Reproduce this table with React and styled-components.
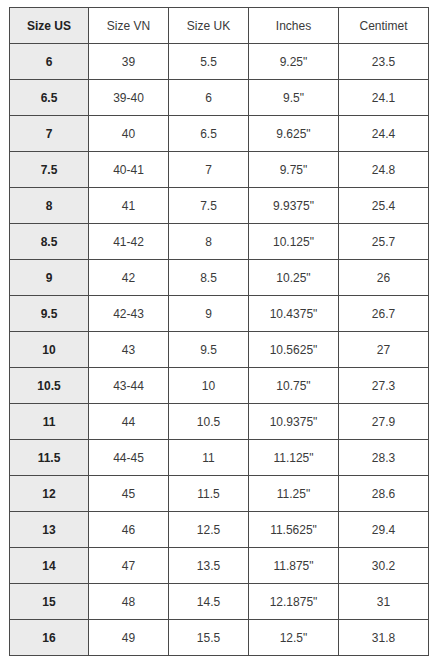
import React from "react";
import styled, { createGlobalStyle } from "styled-components";

const Global = createGlobalStyle`
  html, body { margin: 0; padding: 0; background: #fff; }
  body { font-family: "Liberation Sans", Arial, sans-serif; }
`;

const Page = styled.div`
  padding: 7px 0 0 9px;
`;

const Table = styled.table`
  border-collapse: collapse;
  table-layout: fixed;
  width: 420px;
  font-size: 12px;
  color: #333;
`;

const Cell = styled.td`
  height: 35px;
  padding: 0;
  border: 1px solid #4a4a4a;
  text-align: center;
  vertical-align: middle;
  background: ${(p) => (p.$first ? "#ebebeb" : "#fff")};
  font-weight: ${(p) => (p.$first ? "bold" : "normal")};
  color: ${(p) => (p.$first ? "#222" : "#3a3a3a")};
`;

const headers = ["Size US", "Size VN", "Size UK", "Inches", "Centimet"];
const widths = [79, 80, 80, 90, 90];
const rows = [
  ["6", "39", "5.5", '9.25"', "23.5"],
  ["6.5", "39-40", "6", '9.5"', "24.1"],
  ["7", "40", "6.5", '9.625"', "24.4"],
  ["7.5", "40-41", "7", '9.75"', "24.8"],
  ["8", "41", "7.5", '9.9375"', "25.4"],
  ["8.5", "41-42", "8", '10.125"', "25.7"],
  ["9", "42", "8.5", '10.25"', "26"],
  ["9.5", "42-43", "9", '10.4375"', "26.7"],
  ["10", "43", "9.5", '10.5625"', "27"],
  ["10.5", "43-44", "10", '10.75"', "27.3"],
  ["11", "44", "10.5", '10.9375"', "27.9"],
  ["11.5", "44-45", "11", '11.125"', "28.3"],
  ["12", "45", "11.5", '11.25"', "28.6"],
  ["13", "46", "12.5", '11.5625"', "29.4"],
  ["14", "47", "13.5", '11.875"', "30.2"],
  ["15", "48", "14.5", '12.1875"', "31"],
  ["16", "49", "15.5", '12.5"', "31.8"],
];

export default function App() {
  return (
    <Page>
      <Global />
      <Table>
        <colgroup>
          {widths.map((w, i) => (
            <col key={i} style={{ width: w }} />
          ))}
        </colgroup>
        <tbody>
          <tr>
            {headers.map((h, i) => (
              <Cell key={i} $first={i === 0}>{h}</Cell>
            ))}
          </tr>
          {rows.map((r, ri) => (
            <tr key={ri}>
              {r.map((c, ci) => (
                <Cell key={ci} $first={ci === 0}>{c}</Cell>
              ))}
            </tr>
          ))}
        </tbody>
      </Table>
    </Page>
  );
}
